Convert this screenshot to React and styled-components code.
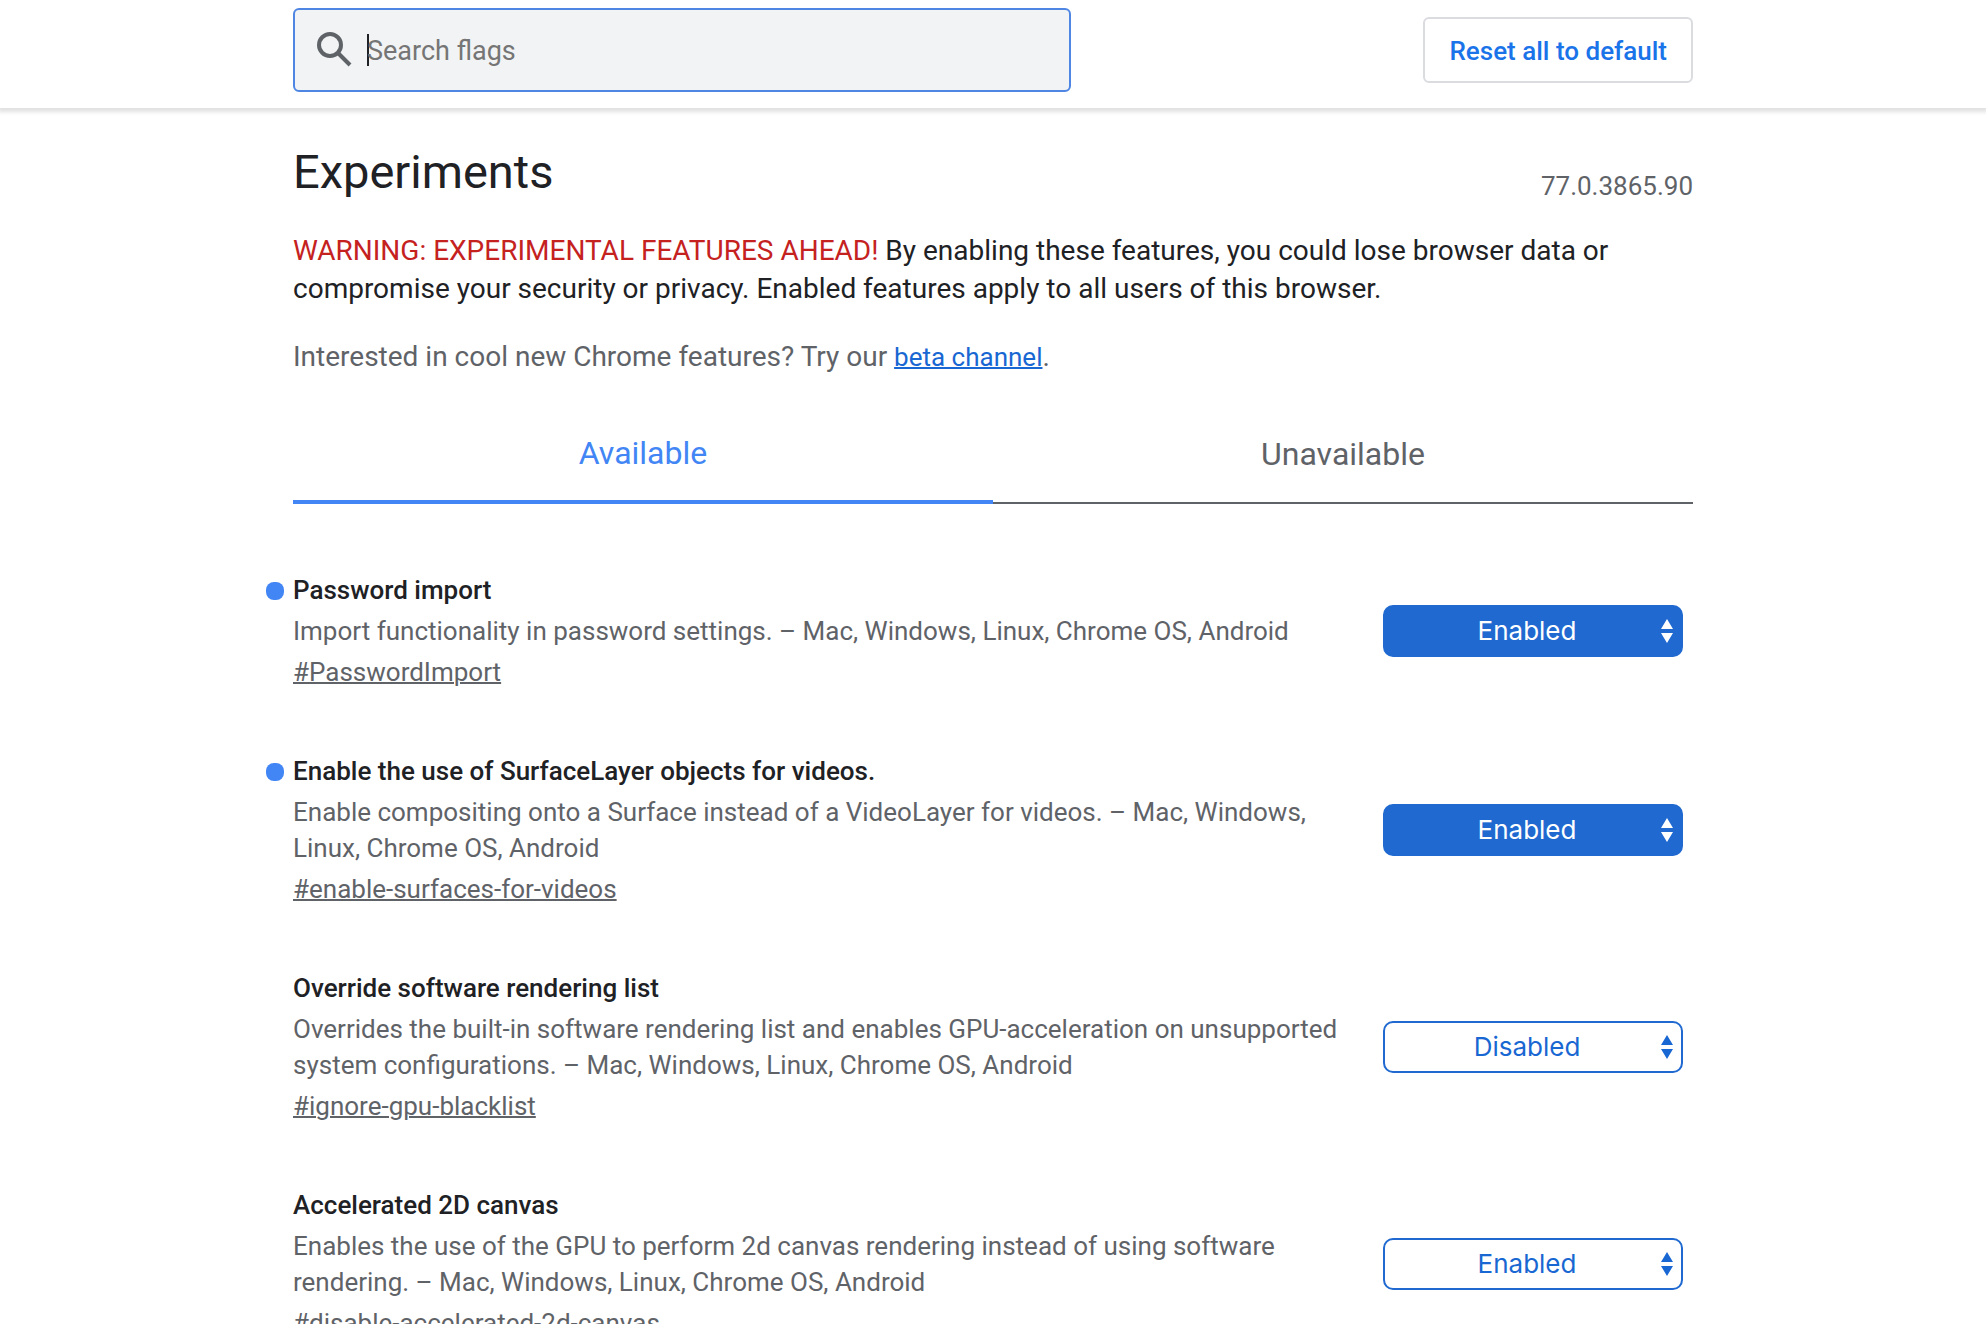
import { useState } from "react";
import styled, { createGlobalStyle } from "styled-components";

const GlobalStyle = createGlobalStyle`
  * {
    box-sizing: border-box;
  }

  body {
    margin: 0;
    background-color: #fff;
    color: #202124;
    font-family: Roboto, "Liberation Sans", sans-serif;
    font-size: 26px;
    line-height: 36px;
  }

  h1, h2, p {
    margin: 0;
  }

  a {
    text-decoration-thickness: 2px;
  }
`;

const Header = styled.header`
  background-color: #fff;
  padding: 8px 20px 16px;
  box-shadow: 0 2px 4px 2px rgba(0, 0, 0, 0.12);
`;

const HeaderInner = styled.div`
  max-width: 1400px;
  margin: 0 auto;
  display: flex;
  align-items: center;
  justify-content: space-between;
  gap: 24px;
`;

const SearchBox = styled.label`
  flex: 0 1 778px;
  height: 84px;
  display: flex;
  align-items: center;
  gap: 14px;
  padding: 0 22px;
  background-color: #f1f3f4;
  border: 2px solid #4f86e4;
  border-radius: 6px;
`;

const SearchInput = styled.input`
  flex: 1;
  min-width: 0;
  height: 32px;
  padding: 2px 0 0;
  border: none;
  outline: none;
  color: #202124;
  font: inherit;
  font-size: 27px;
  caret-color: transparent;
  background: linear-gradient(#202124, #202124) left center / 2px 32px no-repeat;

  &::placeholder {
    color: #757575;
    opacity: 1;
  }
`;

const ResetButton = styled.button`
  height: 66px;
  padding: 2px 24px 0;
  background-color: #fff;
  border: 2px solid #dadce0;
  border-radius: 6px;
  color: #1a73e8;
  font: inherit;
  font-weight: 500;
  white-space: nowrap;
`;

const Content = styled.main`
  max-width: 1440px;
  margin: 0 auto;
  padding: 34px 20px;
`;

const TitleRow = styled.div`
  display: flex;
  align-items: flex-end;
  justify-content: space-between;
`;

const Title = styled.h1`
  font-size: 47px;
  line-height: 60px;
  font-weight: 400;
`;

const Version = styled.span`
  color: #5f6368;
  line-height: 32px;
`;

const Blurb = styled.p`
  margin-top: 30px;
  font-size: 28px;
  line-height: 38px;
`;

const Warning = styled.span`
  color: #c5221f;
`;

const Promo = styled(Blurb)`
  color: #5f6368;
`;

const ChannelLink = styled.a`
  color: #1967d2;
  font-size: 26px;
`;

const Tabs = styled.div`
  display: flex;
  margin-top: 52px;
`;

const Tab = styled.button`
  flex: 1;
  height: 76px;
  padding: 0 0 22px;
  background: none;
  border: none;
  border-bottom: ${({ $selected }) =>
    $selected ? "4px solid #4285f4" : "2px solid #5f6368"};
  color: ${({ $selected }) => ($selected ? "#4285f4" : "#5f6368")};
  font: inherit;
  font-size: 32px;
  line-height: 48px;
`;

const Experiments = styled.div`
  margin: 68px 0 0 -27px;
`;

const Experiment = styled.section`
  display: grid;
  grid-template-columns: 27px minmax(0, 1fr) 300px;
  align-items: center;
  padding-right: 10px;

  + section {
    margin-top: 63px;
  }
`;

const Dot = styled.span`
  align-self: start;
  width: 18px;
  height: 18px;
  margin-top: 10px;
  border-radius: 8px;
  background-color: ${({ $changed }) => ($changed ? "#4285f4" : "transparent")};
`;

const Details = styled.div`
  padding-right: 36px;
`;

const Name = styled.h2`
  margin-bottom: 5px;
  font-size: 26px;
  line-height: 36px;
  font-weight: 500;
`;

const Description = styled.p`
  color: #5f6368;
`;

const Permalink = styled.a`
  display: inline-block;
  margin-top: 5px;
  color: #5f6368;
`;

const SelectWrapper = styled.div`
  position: relative;
  color: ${({ $changed }) => ($changed ? "#fff" : "#1967d2")};
`;

const Select = styled.select`
  appearance: none;
  display: block;
  width: 100%;
  height: 52px;
  padding: 0 12px 2px 0;
  background-color: ${({ $changed }) => ($changed ? "#1f69d0" : "#fff")};
  border: 2px solid #1f69d0;
  border-radius: 10px;
  color: inherit;
  font-family: Inter, "Liberation Sans", sans-serif;
  font-size: 26px;
  text-align: center;
  text-align-last: center;
`;

const Arrows = styled.svg`
  position: absolute;
  top: 14px;
  right: 10px;
  width: 12px;
  height: 24px;
  fill: currentColor;
  pointer-events: none;
`;

const SearchIcon = styled.svg`
  flex: none;
  width: 36px;
  height: 36px;
  fill: none;
  stroke: #5f6368;
  stroke-width: 4;
`;

const experiments = [
  {
    id: "PasswordImport",
    name: "Password import",
    description: "Import functionality in password settings.",
    state: "Enabled",
    changed: true,
  },
  {
    id: "enable-surfaces-for-videos",
    name: "Enable the use of SurfaceLayer objects for videos.",
    description:
      "Enable compositing onto a Surface instead of a VideoLayer for videos.",
    state: "Enabled",
    changed: true,
  },
  {
    id: "ignore-gpu-blacklist",
    name: "Override software rendering list",
    description:
      "Overrides the built-in software rendering list and enables GPU-acceleration on unsupported system configurations.",
    state: "Disabled",
    changed: false,
  },
  {
    id: "disable-accelerated-2d-canvas",
    name: "Accelerated 2D canvas",
    description:
      "Enables the use of the GPU to perform 2d canvas rendering instead of using software rendering.",
    state: "Enabled",
    changed: false,
  },
];

function ExperimentRow({ id, name, description, state, changed }) {
  return (
    <Experiment id={id}>
      <Dot $changed={changed} />
      <Details>
        <Name id={`${id}-name`}>{name}</Name>
        <Description>
          {description} – Mac, Windows, Linux, Chrome OS, Android
        </Description>
        <Permalink href={`#${id}`}>#{id}</Permalink>
      </Details>
      <SelectWrapper $changed={changed}>
        <Select
          $changed={changed}
          aria-labelledby={`${id}-name`}
          defaultValue={state}
        >
          <option>Enabled</option>
          <option>Disabled</option>
        </Select>
        <Arrows viewBox="0 0 12 24" aria-hidden="true">
          <path d="M6 0l6 10H0zM6 24l6-10H0z" />
        </Arrows>
      </SelectWrapper>
    </Experiment>
  );
}

export default function App() {
  const [tab, setTab] = useState("Available");

  return (
    <>
      <GlobalStyle />
      <Header>
        <HeaderInner>
          <SearchBox>
            <SearchIcon viewBox="0 0 36 36" aria-hidden="true">
              <circle cx="13" cy="13" r="11" />
              <path d="M21 21l12 12" />
            </SearchIcon>
            <SearchInput
              type="text"
              placeholder="Search flags"
              aria-label="Search flags"
            />
          </SearchBox>
          <ResetButton type="button">Reset all to default</ResetButton>
        </HeaderInner>
      </Header>
      <Content>
        <TitleRow>
          <Title>Experiments</Title>
          <Version>77.0.3865.90</Version>
        </TitleRow>
        <Blurb>
          <Warning>WARNING: EXPERIMENTAL FEATURES AHEAD!</Warning> By enabling
          these features, you could lose browser data or compromise your
          security or privacy. Enabled features apply to all users of this
          browser.
        </Blurb>
        <Promo>
          Interested in cool new Chrome features? Try our{" "}
          <ChannelLink href="#beta">beta channel</ChannelLink>.
        </Promo>
        <Tabs role="tablist">
          {["Available", "Unavailable"].map((label) => (
            <Tab
              key={label}
              type="button"
              role="tab"
              aria-selected={tab === label}
              $selected={tab === label}
              onClick={() => setTab(label)}
            >
              {label}
            </Tab>
          ))}
        </Tabs>
        <Experiments>
          {experiments.map((experiment) => (
            <ExperimentRow key={experiment.id} {...experiment} />
          ))}
        </Experiments>
      </Content>
    </>
  );
}
